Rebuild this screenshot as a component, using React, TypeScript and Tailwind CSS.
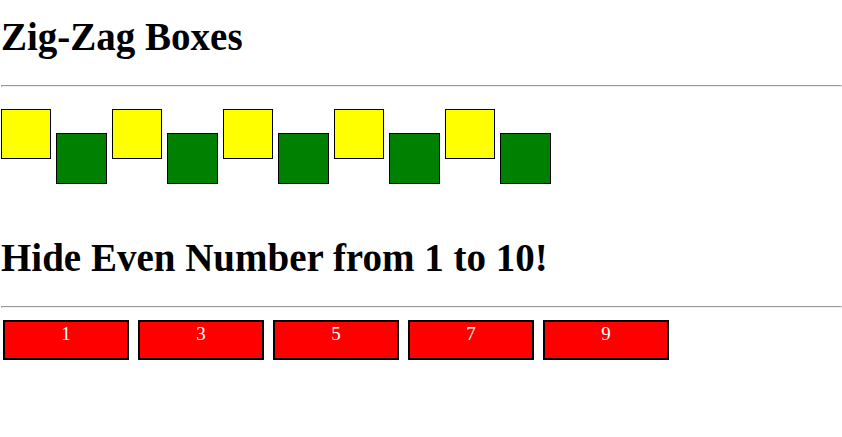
const pairs = [1, 2, 3, 4, 5];
const numbers = Array.from({ length: 10 }, (_, i) => i + 1);

function Heading({ children }: { children: string }) {
  return (
    <>
      <h1 className="pt-3.5 pb-[26px] text-[39px] leading-[45px] font-bold">
        {children}
      </h1>
      <hr className="h-0.5 border border-t-[#9a9a9a] border-r-[#eeeeee] border-b-[#eeeeee] border-l-[#9a9a9a]" />
    </>
  );
}

export default function App() {
  return (
    <main className="bg-white pl-px font-['Liberation_Serif',serif] text-black">
      <section>
        <Heading>Zig-Zag Boxes</Heading>
        <div className="flex gap-[5px] pt-[22px]">
          {pairs.map((n) => (
            <div key={n} className="flex gap-[5px]">
              <div className="size-[50px] border border-black bg-[#ffff00]" />
              <div className="mt-6 size-[51px] border border-black bg-[#008000]" />
            </div>
          ))}
        </div>
      </section>
      <section className="pt-[37px]">
        <Heading>Hide Even Number from 1 to 10!</Heading>
        <ul className="flex gap-[9px] pt-3 pl-0.5">
          {numbers
            .filter((n) => n % 2 === 1)
            .map((n) => (
              <li
                key={n}
                className="h-10 w-[126px] border-2 border-black bg-[#ff0000] text-center text-[19px] leading-6 text-white"
              >
                {n}
              </li>
            ))}
        </ul>
      </section>
    </main>
  );
}
